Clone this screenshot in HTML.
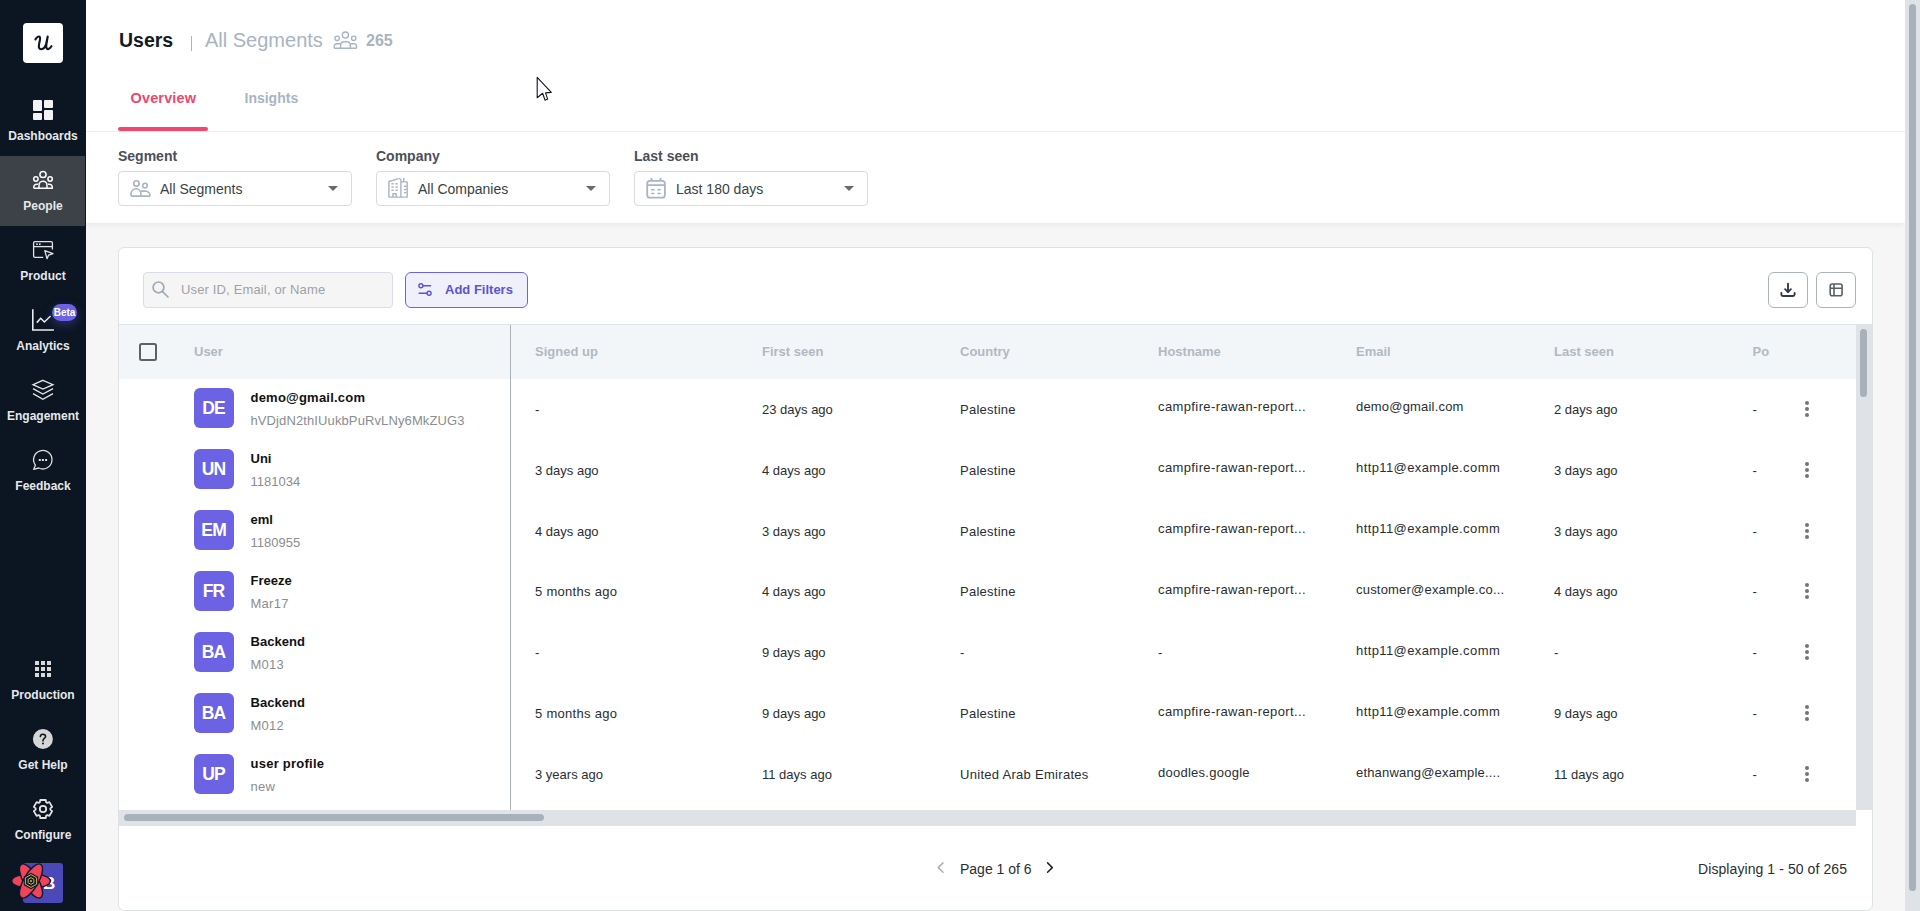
<!DOCTYPE html>
<html><head><meta charset="utf-8">
<style>
*{box-sizing:border-box;margin:0;padding:0}
html,body{width:1920px;height:911px;overflow:hidden;background:#f6f6f6;font-family:"Liberation Sans",sans-serif;color:#1f2329}
.a{position:absolute;white-space:nowrap}
#side{position:absolute;left:0;top:0;width:86px;height:911px;background:#0c1522}
.nav{position:absolute;left:0;width:86px;height:70px;color:#e6e8eb;font-size:12px;font-weight:bold;text-align:center}
.nav svg{position:absolute;left:31px;top:14px}
.nav span{position:absolute;left:0;right:0;top:44px;line-height:14px}
#main{position:absolute;left:86px;top:0;width:1819px;height:911px;background:#f6f6f6}
#top{position:absolute;left:86px;top:0;width:1819px;height:223px;background:#fff;box-shadow:0 2px 6px rgba(0,0,0,0.06)}
.lbl{font-size:14px;font-weight:bold;color:#4b5058}
.dd{position:absolute;top:171px;width:234px;height:35px;border:1px solid #dad9ea;border-radius:4px;background:#fff}
.dd .t{position:absolute;left:41px;top:9px;font-size:14px;color:#3a3f46;line-height:16px}
.dd .c{position:absolute;right:13px;top:14px;width:0;height:0;border-left:5px solid transparent;border-right:5px solid transparent;border-top:5px solid #686a6e}
#card{position:absolute;left:118px;top:247px;width:1755px;height:664px;background:#fff;border:1px solid #dee2e6;border-radius:6px}
.th{position:absolute;top:344px;font-size:13px;font-weight:bold;color:#b1b9c2;line-height:16px}
.cell{position:absolute;font-size:13px;color:#2a2e33;line-height:16px}
.av{position:absolute;left:194px;width:40px;height:40px;border-radius:6px;background:#6b63e3;color:#fff;font-size:17.5px;font-weight:bold;text-align:center;line-height:40px;letter-spacing:-0.8px;text-indent:-0.8px}
.nm{position:absolute;left:250.5px;font-size:13px;font-weight:bold;color:#111;line-height:16px}
.sub{position:absolute;left:250.5px;font-size:13px;color:#8b8d90;line-height:16px}
.dots{position:absolute;left:1805px;width:4px;height:16px}
.dots i{position:absolute;left:0;width:4px;height:4px;border-radius:2px;background:#757575}
</style></head><body>
<div id="main"></div>
<div id="top">
</div>
<div class="a" style="left:86px;top:131px;width:1819px;height:1px;background:#eeeeee"></div>

<!-- sidebar -->
<div id="side">
  <div class="a" style="left:23px;top:23px;width:40px;height:40px;background:#fff;border-radius:4px"></div>
  <svg class="a" style="left:0;top:0" width="86" height="80" viewBox="0 0 86 80"><path d="M35.4,39.5 C36.6,37.3 38.4,36 39.5,36.6 C40.5,37.2 40.2,38.8 39.8,40.6 L39,44.6 C38.4,47.6 39.4,49.3 41.2,49.2 C43.6,49 45.3,46.8 46.2,43.4 L47.7,36.6 M47.7,36.6 L46.4,44.3 C45.9,47.4 46.5,49.3 48.1,49.1 C49.4,48.9 50.5,47.7 51.4,46.2" fill="none" stroke="#0c1522" stroke-width="2.1" stroke-linecap="round" stroke-linejoin="round"/></svg>
  <div class="a" style="left:0;top:156px;width:85px;height:70px;background:#3d4148"></div>
  <svg class="a" style="left:0;top:0" width="86" height="911" viewBox="0 0 86 911">
    <g fill="#f2f2f2">
      <rect x="33" y="100" width="9" height="11" rx="1"/>
      <rect x="33" y="113" width="9" height="7" rx="1"/>
      <rect x="44" y="100" width="9" height="8" rx="1"/>
      <rect x="44" y="110" width="9" height="10" rx="1"/>
    </g>
    <g fill="none" stroke="#ffffff" stroke-width="1.5">
      <circle cx="43" cy="174.5" r="3.1"/>
      <circle cx="35.9" cy="179" r="2.2"/>
      <circle cx="50.1" cy="179" r="2.2"/>
      <path d="M39,188 V185.2 A4,4 0 0 1 47,185.2 V188"/>
      <path d="M33.8,188.2 H52.2 V187 A3.2,2.8 0 0 0 48,184.3 M33.8,188.2 V187 A3.2,2.8 0 0 1 38,184.3"/>
    </g>
    <g fill="none" stroke="#e3e3e3" stroke-width="1.3" stroke-linejoin="round">
      <path d="M43.2,257.4 H35 A1.4,1.4 0 0 1 33.6,256 V243 A1.4,1.4 0 0 1 35,241.6 H51 A1.4,1.4 0 0 1 52.4,243 V249.5"/>
      <path d="M33.6,246.6 H52.4"/>
      <path d="M44.8,250.6 L53,253.6 L48.6,255.2 L47,258.6 Z"/>
    </g>
    <g fill="#e3e3e3"><rect x="36.2" y="243.4" width="1.6" height="1.6"/><rect x="39" y="243.4" width="1.6" height="1.6"/></g>
    <g fill="none" stroke="#ececec" stroke-width="1.6">
      <path d="M32.8,309.3 V330 H53.9"/>
      <path d="M36.8,322.6 L40.7,318.3 L44.4,322 L50.6,316"/>
    </g>
    <g fill="none" stroke="#e6e6e6" stroke-width="1.3" stroke-linejoin="miter">
      <path d="M42.9,380.3 L53,384.7 L42.9,389 L33,384.7 Z"/>
      <path d="M33,388.6 L42.9,394 L53,388.6"/>
      <path d="M33,393.6 L42.9,399.2 L53,393.6"/>
    </g>
    <g fill="none" stroke="#e0e0e0" stroke-width="1.3" stroke-linejoin="round">
      <path d="M35.4,465.2 A9.2,9.2 0 1 1 38.8,468 L33.6,469.4 Z"/>
    </g>
    <g fill="#e0e0e0"><rect x="38.8" y="459" width="2" height="2"/><rect x="41.9" y="459" width="2" height="2"/><rect x="45.1" y="459" width="2" height="2"/></g>
    <g fill="#d9d9d9">
      <rect x="35" y="661" width="4" height="4"/><rect x="41" y="661" width="4" height="4"/><rect x="47" y="661" width="4" height="4"/>
      <rect x="35" y="667" width="4" height="4"/><rect x="41" y="667" width="4" height="4"/><rect x="47" y="667" width="4" height="4"/>
      <rect x="35" y="673" width="4" height="4"/><rect x="41" y="673" width="4" height="4"/><rect x="47" y="673" width="4" height="4"/>
    </g>
    <circle cx="42.9" cy="739" r="10" fill="#d6d6d6"/><path d="M40.3,736.6 C40.4,735 41.5,734.2 42.9,734.2 C44.5,734.2 45.6,735.2 45.6,736.5 C45.6,738.2 43.3,738.5 43,740.2 L43,740.9" fill="none" stroke="#0c1522" stroke-width="1.5" stroke-linecap="round"/><circle cx="43" cy="743.4" r="1" fill="#0c1522"/>
    <path d="M39.87,802.29 L40.25,800.01 L45.75,800.01 L46.13,802.29 L47.24,802.94 L49.41,802.13 L52.16,806.89 L50.37,808.36 L50.37,809.64 L52.16,811.11 L49.41,815.87 L47.24,815.06 L46.13,815.71 L45.75,817.99 L40.25,817.99 L39.87,815.71 L38.76,815.06 L36.59,815.87 L33.84,811.11 L35.63,809.64 L35.63,808.36 L33.84,806.89 L36.59,802.13 L38.76,802.94Z" fill="none" stroke="#e3e3e3" stroke-width="1.8" stroke-linejoin="round"/>
    <circle cx="43" cy="809" r="3.2" fill="none" stroke="#e3e3e3" stroke-width="1.8"/>
    <rect x="23" y="863" width="40" height="40" rx="3" fill="#4b48b8"/>
  </svg>
  <div class="a" style="left:43px;top:875.5px;font-size:17px;font-weight:bold;color:#fff;line-height:16px">B</div>
  <svg class="a" style="left:0;top:850px" width="86" height="61" viewBox="0 850 86 61">
    <g fill="#f2435a" stroke="#0c1a2e" stroke-width="1.4">
      <ellipse cx="31" cy="881" rx="19.3" ry="7.3"/>
      <ellipse cx="31" cy="881" rx="19.3" ry="7.3" transform="rotate(60 31 881)"/>
      <ellipse cx="31" cy="881" rx="19.3" ry="7.3" transform="rotate(-60 31 881)"/>
    </g>
    <path d="M31,873.5 L37.5,877.2 L37.5,884.8 L31,888.5 L24.5,884.8 L24.5,877.2 Z" fill="#0c1a2e" stroke="#0c1a2e" stroke-width="1.4"/>
    <path d="M31,874.6 L36.6,877.8 L36.6,884.2 L31,887.4 L25.4,884.2 L25.4,877.8 Z" fill="none" stroke="#e8c547" stroke-width="0.9"/>
    <path d="M31,877.6 L33.9,879.3 L33.9,882.7 L31,884.4 L28.1,882.7 L28.1,879.3 Z" fill="none" stroke="#e8c547" stroke-width="0.9"/>
    <circle cx="31" cy="881" r="0.9" fill="#e8c547"/>
  </svg>
  <div class="a" style="left:52px;top:304px;width:25px;height:17px;border-radius:9px;background:#6b63e3;box-shadow:0 4px 9px 1px rgba(80,80,200,0.35)"></div>
  <div class="a" style="left:52px;top:306px;width:25px;text-align:center;font-size:10px;font-weight:bold;color:#fff;line-height:14px">Beta</div>
  
  <div class="nav" style="top:85px"><span>Dashboards</span></div>
  <div class="nav" style="top:155px"><span>People</span></div>
  <div class="nav" style="top:225px"><span>Product</span></div>
  <div class="nav" style="top:295px"><span>Analytics</span></div>
  <div class="nav" style="top:365px"><span>Engagement</span></div>
  <div class="nav" style="top:435px"><span>Feedback</span></div>
  <div class="nav" style="top:644px"><span>Production</span></div>
  <div class="nav" style="top:714px"><span>Get Help</span></div>
  <div class="nav" style="top:784px"><span>Configure</span></div>
</div>

<!-- header -->
<div class="a" style="left:119px;top:28px;font-size:19.5px;font-weight:bold;color:#151a21;line-height:24px">Users</div>
<div class="a" style="left:190.6px;top:35.5px;width:1.3px;height:15.8px;background:#a9b4c2"></div>
<div class="a" style="left:205px;top:28px;font-size:20px;color:#a9b4c2;line-height:24px">All Segments</div>
<div class="a" style="left:366px;top:31px;font-size:16px;font-weight:bold;color:#a9b4c2;line-height:20px">265</div>

<!-- tabs -->
<div class="a" style="left:130.5px;top:89.5px;font-size:14.5px;font-weight:bold;color:#f0476f;line-height:16px;letter-spacing:0.15px">Overview</div>
<div class="a" style="left:244.5px;top:89.5px;font-size:14px;font-weight:bold;color:#a9b4c2;line-height:16px">Insights</div>
<div class="a" style="left:118px;top:127px;width:90px;height:4px;background:#f0476f;border-radius:2px"></div>

<!-- filters -->
<div class="a lbl" style="left:118px;top:148px;line-height:16px">Segment</div>
<div class="a lbl" style="left:376px;top:148px;line-height:16px">Company</div>
<div class="a lbl" style="left:634px;top:148px;line-height:16px">Last seen</div>
<div class="dd" style="left:118px"><div class="t">All Segments</div><div class="c"></div></div>
<div class="dd" style="left:376px"><div class="t">All Companies</div><div class="c"></div></div>
<div class="dd" style="left:634px"><div class="t">Last 180 days</div><div class="c"></div></div>

<!-- card -->
<div id="card"></div>
<div class="a" style="left:143px;top:272px;width:250px;height:36px;background:#f5f5f5;border:1px solid #dcdbe8;border-radius:4px"></div>
<div class="a" style="left:181px;top:282px;font-size:13px;color:#a0a2a5;line-height:16px;letter-spacing:0.15px">User ID, Email, or Name</div>
<div class="a" style="left:405px;top:272px;width:123px;height:36px;background:#f0f0fa;border:1px solid #6b63e3;border-radius:6px"></div>
<div class="a" style="left:445px;top:282px;font-size:13px;font-weight:bold;color:#5b54d6;line-height:16px">Add Filters</div>
<div class="a" style="left:1768px;top:272px;width:40px;height:36px;border:1px solid #aab3bd;border-radius:6px;background:#fff"></div>
<div class="a" style="left:1816px;top:272px;width:40px;height:36px;border:1px solid #aab3bd;border-radius:6px;background:#fff"></div>

<!-- table header -->
<div class="a" style="left:119px;top:324px;width:1753px;height:1px;background:#dde3ea"></div>
<div class="a" style="left:119px;top:325px;width:1737px;height:54px;background:#f3f6f9"></div>
<div class="a" style="left:139px;top:343px;width:18px;height:18px;border:2px solid #606162;border-radius:2.5px"></div>
<div class="a" style="left:510px;top:325px;width:1px;height:485px;background:#a9b1b9"></div>
<div class="th" style="left:194px">User</div>
<div class="th" style="left:535px">Signed up</div>
<div class="th" style="left:762px">First seen</div>
<div class="th" style="left:960px">Country</div>
<div class="th" style="left:1158px">Hostname</div>
<div class="th" style="left:1356px">Email</div>
<div class="th" style="left:1554px">Last seen</div>
<div class="th" style="left:1752.5px">Po</div>

<!-- scrollbars -->
<div class="a" style="left:1856px;top:325px;width:16px;height:485px;background:#dfe3e7"></div>
<div class="a" style="left:1860px;top:329px;width:7px;height:68px;background:#a8b1ba;border-radius:4px"></div>
<div class="a" style="left:119px;top:810px;width:1737px;height:16px;background:#dfe3e7"></div>
<div class="a" style="left:124px;top:814px;width:420px;height:7px;background:#a8b1ba;border-radius:4px"></div>
<div class="a" style="left:1905px;top:0;width:15px;height:911px;background:#dfe3e7"></div>
<div class="a" style="left:1909px;top:4px;width:7px;height:887px;background:#a8b1ba;border-radius:4px"></div>

<!-- pagination -->
<div class="a" style="left:960px;top:861px;font-size:14px;color:#2a2e33;line-height:16px">Page 1 of 6</div>
<div class="a" style="left:1698px;top:861px;font-size:14px;color:#2a2e33;line-height:16px;letter-spacing:0.08px">Displaying 1 - 50 of 265</div>

<div id="rows">
<div class="av" style="top:388px">DE</div>
<div class="nm" style="top:390px;letter-spacing:0.22px">demo@gmail.com</div>
<div class="sub" style="top:413px;letter-spacing:0.11px">hVDjdN2thIUukbPuRvLNy6MkZUG3</div>
<div class="cell" style="left:535px;top:402px">-</div>
<div class="cell" style="left:762px;top:402px">23 days ago</div>
<div class="cell" style="left:960px;top:402px;letter-spacing:0.25px">Palestine</div>
<div class="cell" style="left:1158px;top:399px;letter-spacing:0.39px">campfire-rawan-report...</div>
<div class="cell" style="left:1356px;top:399px;letter-spacing:0.19px">demo@gmail.com</div>
<div class="cell" style="left:1554px;top:402px">2 days ago</div>
<div class="cell" style="left:1752.5px;top:402px">-</div>
<div class="dots" style="top:401px"><i style="top:0"></i><i style="top:6px"></i><i style="top:12px"></i></div>
<div class="av" style="top:449px">UN</div>
<div class="nm" style="top:451px">Uni</div>
<div class="sub" style="top:474px">1181034</div>
<div class="cell" style="left:535px;top:463px">3 days ago</div>
<div class="cell" style="left:762px;top:463px">4 days ago</div>
<div class="cell" style="left:960px;top:463px;letter-spacing:0.25px">Palestine</div>
<div class="cell" style="left:1158px;top:460px;letter-spacing:0.39px">campfire-rawan-report...</div>
<div class="cell" style="left:1356px;top:460px;letter-spacing:0.40px">http11@example.comm</div>
<div class="cell" style="left:1554px;top:463px">3 days ago</div>
<div class="cell" style="left:1752.5px;top:463px">-</div>
<div class="dots" style="top:462px"><i style="top:0"></i><i style="top:6px"></i><i style="top:12px"></i></div>
<div class="av" style="top:510px">EM</div>
<div class="nm" style="top:512px">eml</div>
<div class="sub" style="top:535px">1180955</div>
<div class="cell" style="left:535px;top:524px">4 days ago</div>
<div class="cell" style="left:762px;top:524px">3 days ago</div>
<div class="cell" style="left:960px;top:524px;letter-spacing:0.25px">Palestine</div>
<div class="cell" style="left:1158px;top:521px;letter-spacing:0.39px">campfire-rawan-report...</div>
<div class="cell" style="left:1356px;top:521px;letter-spacing:0.40px">http11@example.comm</div>
<div class="cell" style="left:1554px;top:524px">3 days ago</div>
<div class="cell" style="left:1752.5px;top:524px">-</div>
<div class="dots" style="top:523px"><i style="top:0"></i><i style="top:6px"></i><i style="top:12px"></i></div>
<div class="av" style="top:571px">FR</div>
<div class="nm" style="top:573px">Freeze</div>
<div class="sub" style="top:596px;letter-spacing:0.26px">Mar17</div>
<div class="cell" style="left:535px;top:584px;letter-spacing:0.29px">5 months ago</div>
<div class="cell" style="left:762px;top:584px">4 days ago</div>
<div class="cell" style="left:960px;top:584px;letter-spacing:0.25px">Palestine</div>
<div class="cell" style="left:1158px;top:582px;letter-spacing:0.39px">campfire-rawan-report...</div>
<div class="cell" style="left:1356px;top:582px;letter-spacing:0.20px">customer@example.co...</div>
<div class="cell" style="left:1554px;top:584px">4 days ago</div>
<div class="cell" style="left:1752.5px;top:584px">-</div>
<div class="dots" style="top:583px"><i style="top:0"></i><i style="top:6px"></i><i style="top:12px"></i></div>
<div class="av" style="top:632px">BA</div>
<div class="nm" style="top:634px;letter-spacing:0.05px">Backend</div>
<div class="sub" style="top:657px;letter-spacing:0.25px">M013</div>
<div class="cell" style="left:535px;top:645px">-</div>
<div class="cell" style="left:762px;top:645px">9 days ago</div>
<div class="cell" style="left:960px;top:645px">-</div>
<div class="cell" style="left:1158px;top:645px">-</div>
<div class="cell" style="left:1356px;top:643px;letter-spacing:0.40px">http11@example.comm</div>
<div class="cell" style="left:1554px;top:645px">-</div>
<div class="cell" style="left:1752.5px;top:645px">-</div>
<div class="dots" style="top:644px"><i style="top:0"></i><i style="top:6px"></i><i style="top:12px"></i></div>
<div class="av" style="top:693px">BA</div>
<div class="nm" style="top:695px;letter-spacing:0.05px">Backend</div>
<div class="sub" style="top:718px;letter-spacing:0.25px">M012</div>
<div class="cell" style="left:535px;top:706px;letter-spacing:0.29px">5 months ago</div>
<div class="cell" style="left:762px;top:706px">9 days ago</div>
<div class="cell" style="left:960px;top:706px;letter-spacing:0.25px">Palestine</div>
<div class="cell" style="left:1158px;top:704px;letter-spacing:0.39px">campfire-rawan-report...</div>
<div class="cell" style="left:1356px;top:704px;letter-spacing:0.40px">http11@example.comm</div>
<div class="cell" style="left:1554px;top:706px">9 days ago</div>
<div class="cell" style="left:1752.5px;top:706px">-</div>
<div class="dots" style="top:705px"><i style="top:0"></i><i style="top:6px"></i><i style="top:12px"></i></div>
<div class="av" style="top:754px">UP</div>
<div class="nm" style="top:756px;letter-spacing:0.25px">user profile</div>
<div class="sub" style="top:779px;letter-spacing:0.25px">new</div>
<div class="cell" style="left:535px;top:767px">3 years ago</div>
<div class="cell" style="left:762px;top:767px">11 days ago</div>
<div class="cell" style="left:960px;top:767px;letter-spacing:0.29px">United Arab Emirates</div>
<div class="cell" style="left:1158px;top:765px;letter-spacing:0.26px">doodles.google</div>
<div class="cell" style="left:1356px;top:765px;letter-spacing:0.18px">ethanwang@example....</div>
<div class="cell" style="left:1554px;top:767px">11 days ago</div>
<div class="cell" style="left:1752.5px;top:767px">-</div>
<div class="dots" style="top:766px"><i style="top:0"></i><i style="top:6px"></i><i style="top:12px"></i></div>
</div>
<svg class="a" style="left:0;top:0;pointer-events:none" width="1920" height="911" viewBox="0 0 1920 911">
  <g fill="none" stroke="#a9b4c2" stroke-width="1.35">
    <circle cx="345.4" cy="35.1" r="3.1"/>
    <circle cx="337.1" cy="38.3" r="2.2"/>
    <circle cx="353.7" cy="38.3" r="2.2"/>
    <path d="M340.6,48.2 V45.2 A3.6,3.6 0 0 1 344.2,41.7 H346.7 A3.6,3.6 0 0 1 350.3,45.2 V48.2"/>
    <path d="M334.1,48.2 V46.6 A3,3 0 0 1 337.1,43.7 H340.6 M350.3,43.7 H353.7 A3,3 0 0 1 356.6,46.6 V48.2 M334.1,48.2 H356.6"/>
  </g>
  <g fill="none" stroke="#a9b4c2" stroke-width="1.6">
    <circle cx="136.4" cy="183.4" r="2.7"/>
    <circle cx="145" cy="185.6" r="2.3"/>
    <path d="M131,196.1 V193.8 A5,5 0 0 1 141,193.8 V196.1"/>
    <path d="M141,191.1 H145.3 A4.8,4.8 0 0 1 150.1,195.9 M131,196.1 H150.1"/>
  </g>
  <g fill="none" stroke="#a9b4c2" stroke-width="1.4" stroke-linejoin="round">
    <path d="M388.9,197.1 V181.5 L398.8,178.7 A1.6,1.6 0 0 1 400.9,180.3 V197.1 Z"/>
    <path d="M400.9,181.9 H407.2 V197.1 H400.9"/>
    <path d="M403.7,178 V181.9"/>
    <path d="M392.9,197.1 V193.8 H396.2 V197.1"/>
    <path d="M404,186.3 H406.6 M404,189.5 H406.6 M404,192.6 H406.6"/>
  </g>
  <g fill="#a9b4c2">
    <rect x="391.4" y="183.1" width="2.4" height="1.4"/><rect x="395.4" y="183.1" width="2.4" height="1.4"/>
    <rect x="391.4" y="186.3" width="2.4" height="1.4"/><rect x="395.4" y="186.3" width="2.4" height="1.4"/>
    <rect x="391.4" y="189.5" width="2.4" height="1.4"/><rect x="395.4" y="189.5" width="2.4" height="1.4"/>
  </g>
  <g fill="none" stroke="#a9b4c2" stroke-width="1.8">
    <rect x="647.2" y="180.9" width="17.7" height="16.8" rx="2.8"/>
    <path d="M647.2,185.2 H664.9 M651.5,178 V181 M660.5,178 V181"/>
  </g>
  <g fill="#a9b4c2">
    <rect x="651" y="189.1" width="3.7" height="1.5" rx="0.7"/><rect x="657.2" y="189.1" width="3.7" height="1.5" rx="0.7"/>
    <rect x="651" y="192.7" width="3.7" height="1.5" rx="0.7"/><rect x="657.2" y="192.7" width="3.7" height="1.5" rx="0.7"/>
  </g>
  <g fill="none" stroke="#a0aab5" stroke-width="1.7" stroke-linecap="round">
    <circle cx="158.5" cy="287.4" r="5.4"/>
    <path d="M162.6,291.6 L168,297"/>
  </g>
  <g fill="none" stroke="#5b53e0" stroke-width="1.4" stroke-linecap="round">
    <circle cx="420.9" cy="285.8" r="2"/>
    <path d="M423,285.8 H430.6"/>
    <circle cx="429.1" cy="293.2" r="2"/>
    <path d="M419.1,293.2 H427"/>
  </g>
  <g fill="none" stroke="#353b43" stroke-width="1.9" stroke-linecap="round" stroke-linejoin="round">
    <path d="M1788,283.6 V292"/>
    <path d="M1785.1,289.2 L1788,292.1 L1790.9,289.2"/>
    <path d="M1781.4,293 V294.2 A1.8,1.8 0 0 0 1783.2,296 H1792.8 A1.8,1.8 0 0 0 1794.6,294.2 V293"/>
  </g>
  <g fill="none" stroke="#5a5f66" stroke-width="1.6">
    <rect x="1830.2" y="284" width="11.9" height="11.8" rx="2"/>
    <path d="M1830.2,288.2 H1842.1 M1834,284 V295.8"/>
  </g>
  <g fill="none" stroke-width="1.5" stroke-linecap="round" stroke-linejoin="round">
    <path d="M943,862.9 L938.2,867.6 L943,872.3" stroke="#a9b0b6"/>
    <path d="M1047.6,862.9 L1052.3,867.6 L1047.6,872.3" stroke="#1f2328"/>
  </g>
  <path d="M537.2,77.3 V97.7 L542.6,93.3 L545.1,100.2 L547.7,99.1 L545.5,92.9 L551.3,92.4 Z" fill="#fff" stroke="#0e1520" stroke-width="1.1" stroke-linejoin="round"/>
</svg>

</body></html>
